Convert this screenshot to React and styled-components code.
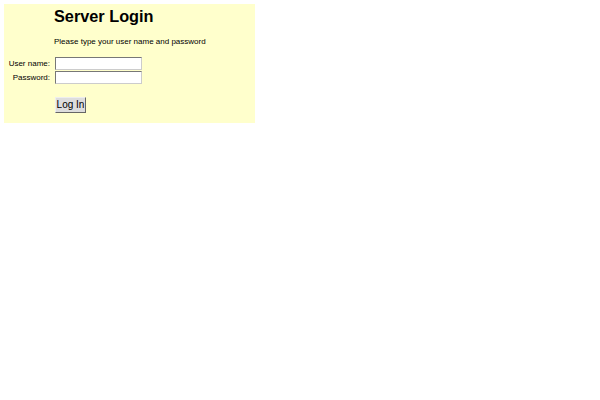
import React from 'react';
import styled, { createGlobalStyle } from 'styled-components';

const GlobalStyle = createGlobalStyle`
  body {
    margin: 4px;
    background: #ffffff;
    font-family: "Liberation Sans", Arial, sans-serif;
    color: #000;
  }
`;

export default function App() {
  return (
    <>
      <GlobalStyle />
      <Panel>
        <Title>Server Login</Title>
        <Hint>Please type your user name and password</Hint>
        <Form onSubmit={(e) => e.preventDefault()}>
          <Row>
            <Label htmlFor="user">User name:</Label>
            <Field id="user" type="text" />
          </Row>
          <Row>
            <Label htmlFor="pass">Password:</Label>
            <Field id="pass" type="password" />
          </Row>
          <Actions>
            <Button type="submit">Log In</Button>
          </Actions>
        </Form>
      </Panel>
    </>
  );
}

const Panel = styled.div`
  width: 251px;
  height: 119px;
  box-sizing: border-box;
  background: #ffffcc;
  padding: 1px 0 0 50px;
  display: flex;
  flex-direction: column;
`;

const Title = styled.h1`
  margin: 0;
  font-size: 16.3px;
  font-weight: bold;
  line-height: 22px;
`;

const Hint = styled.p`
  margin: 9px 0 0;
  font-size: 8px;
  line-height: 12px;
`;

const Form = styled.form`
  margin: 0 0 0 -50px;
  padding-top: 9px;
  display: flex;
  flex-direction: column;
  gap: 1px;
`;

const Row = styled.div`
  display: flex;
  align-items: center;
  gap: 5px;
`;

const Label = styled.label`
  width: 46px;
  text-align: right;
  font-size: 8px;
`;

const Field = styled.input`
  width: 87px;
  height: 13px;
  box-sizing: border-box;
  padding: 0 2px;
  border: 1px solid #777;
  border-right-color: #ccc;
  border-bottom-color: #ccc;
  background: #fff;
  font-size: 8px;
`;

const Actions = styled.div`
  padding: 9px 0 0 51px;
`;

const Button = styled.button`
  width: 31px;
  height: 16px;
  padding: 0;
  box-sizing: border-box;
  background: #dddddd;
  border: 1px solid;
  border-color: #eee #666 #666 #eee;
  font-family: "Liberation Sans", Arial, sans-serif;
  font-size: 10px;
  color: #000;
`;
